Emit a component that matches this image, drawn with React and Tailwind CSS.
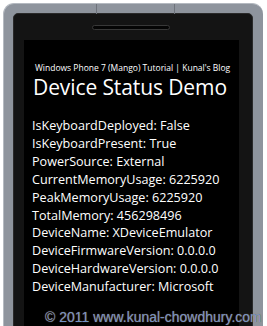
export default function App() {
  const items = [
    "IsKeyboardDeployed: False",
    "IsKeyboardPresent: True",
    "PowerSource: External",
    "CurrentMemoryUsage: 6225920",
    "PeakMemoryUsage: 6225920",
    "TotalMemory: 456298496",
    "DeviceName: XDeviceEmulator",
    "DeviceFirmwareVersion: 0.0.0.0",
    "DeviceHardwareVersion: 0.0.0.0",
    "DeviceManufacturer: Microsoft",
  ];
  return (
    <div className="relative w-[267px] h-[326px] overflow-hidden bg-white pt-[3px] pl-[3px] pr-[4px]">
      <div className="relative h-[360px] rounded-t-[11px] bg-[#8e949d] border-t border-l border-[#b4b9c0] pt-[9px] pl-[9px] pr-[10px]">
        <div className="absolute left-[92px] top-0 w-px h-[10px] bg-[#6e737b]" />
        <div className="absolute left-[170px] top-0 w-px h-[10px] bg-[#6e737b]" />
        <div className="h-full flex flex-col rounded-t-[5px] border border-[#2a2a2a] bg-[#141414] pt-[11px] pl-[10px] pr-[13px]">
          <div className="flex justify-center h-[15px] pr-[2px]">
            <div className="w-[78px] h-[5px] rounded-full bg-[#050505] border border-[#383838]" />
          </div>
          <div className="flex-1 flex flex-col bg-black pt-[22px] pl-[8px] text-white font-['Open_Sans',sans-serif]">
            <div className="pl-[3px] text-[8.5px] leading-[11px]">
              Windows Phone 7 (Mango) Tutorial | Kunal's Blog
            </div>
            <div className="pl-[1px] mt-[2px] text-[21px] leading-[24px] tracking-[-0.1px]">
              Device Status Demo
            </div>
            <div className="mt-[18px] flex flex-col text-[12.6px] leading-[17.9px]">
              {items.map((t) => (
                <div key={t}>{t}</div>
              ))}
            </div>
          </div>
        </div>
      </div>
      <div className="absolute left-[45px] top-[308px] text-[14px] leading-[18px] text-[#6d91c6] font-['Liberation_Sans',Arial,sans-serif] [text-shadow:0_0_1px_#b07a3a]">
        © 2011 www.kunal-chowdhury.com
      </div>
    </div>
  );
}
